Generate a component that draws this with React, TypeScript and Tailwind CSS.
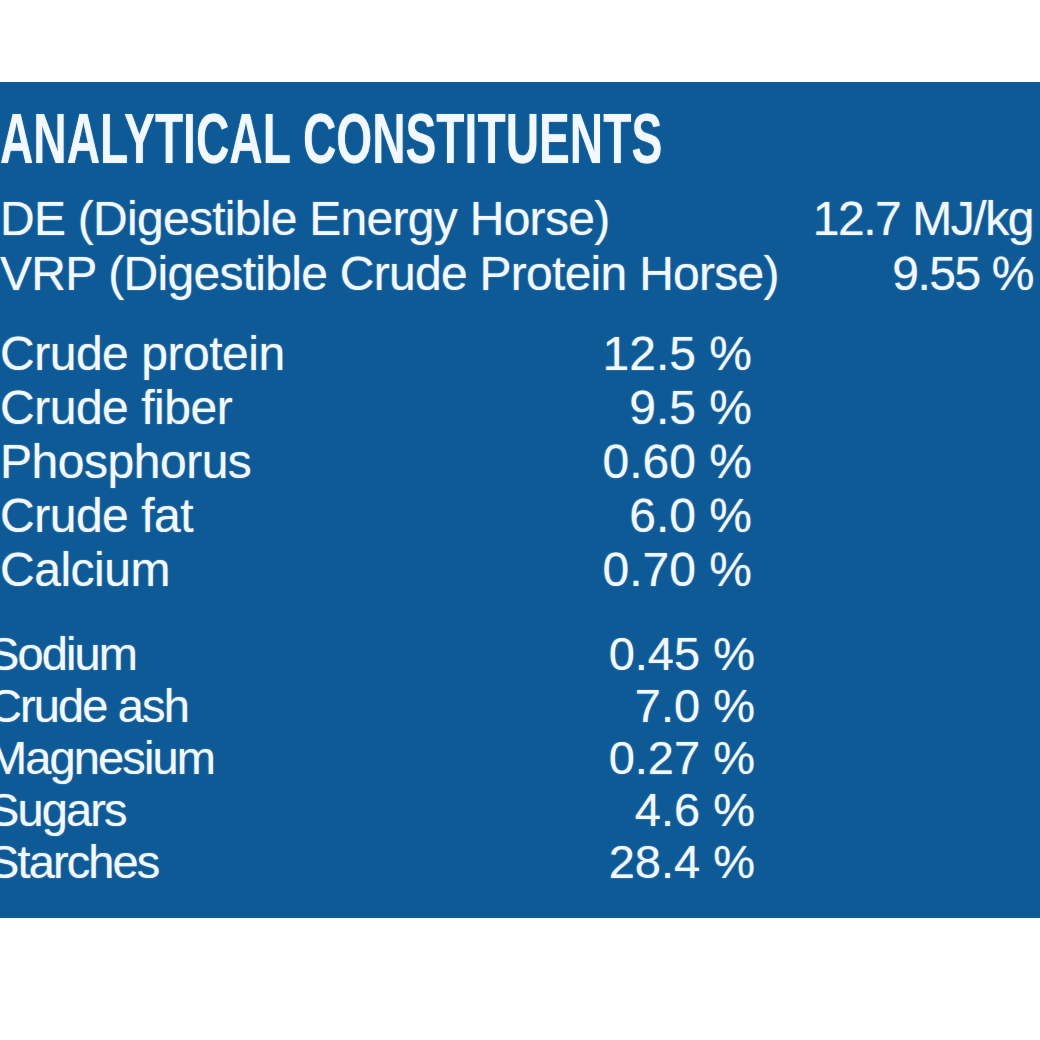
import React from "react";

const group1: [string, string][] = [
  ["Crude protein", "12.5 %"],
  ["Crude fiber", "9.5 %"],
  ["Phosphorus", "0.60 %"],
  ["Crude fat", "6.0 %"],
  ["Calcium", "0.70 %"],
];

const group2: [string, string][] = [
  ["Sodium", "0.45 %"],
  ["Crude ash", "7.0 %"],
  ["Magnesium", "0.27 %"],
  ["Sugars", "4.6 %"],
  ["Starches", "28.4 %"],
];

export default function App() {
  return (
    <div className="w-[1040px] h-[1040px] bg-white overflow-hidden font-['Liberation_Sans',Arial,sans-serif]">
      <div className="mt-[82px] h-[836px] bg-[#0d5a97] text-[#f2f8ff] overflow-hidden pt-[22px] flex flex-col [text-shadow:0_0_1.5px_rgba(225,242,255,0.55)]">
        <div className="h-[70px] whitespace-nowrap">
          <span className="inline-block origin-left scale-x-[0.66] text-[70px] leading-[70px] font-bold">
            ANALYTICAL CONSTITUENTS
          </span>
        </div>

        <div className="mt-[17px] flex flex-col pr-[7px] text-[48px] whitespace-nowrap">
          <div className="flex justify-between leading-[55px]">
            <span className="tracking-[-0.015em]">DE (Digestible Energy Horse)</span>
            <span className="tracking-[-0.03em]">12.7 MJ/kg</span>
          </div>
          <div className="flex justify-between leading-[55px]">
            <span className="tracking-[-0.015em]">VRP (Digestible Crude Protein Horse)</span>
            <span className="tracking-[-0.03em]">9.55 %</span>
          </div>
        </div>

        <div className="mt-[26px] w-[752px] flex flex-col text-[48px] whitespace-nowrap">
          {group1.map(([label, value]) => (
            <div key={label} className="flex justify-between leading-[54px]">
              <span className="tracking-[-0.01em]">{label}</span>
              <span>{value}</span>
            </div>
          ))}
        </div>

        <div className="mt-[31px] w-[755px] flex flex-col text-[47px] whitespace-nowrap">
          {group2.map(([label, value]) => (
            <div key={label} className="flex justify-between leading-[52px]">
              <span className="-ml-[12px] tracking-[-0.04em]">{label}</span>
              <span>{value}</span>
            </div>
          ))}
        </div>
      </div>
    </div>
  );
}
